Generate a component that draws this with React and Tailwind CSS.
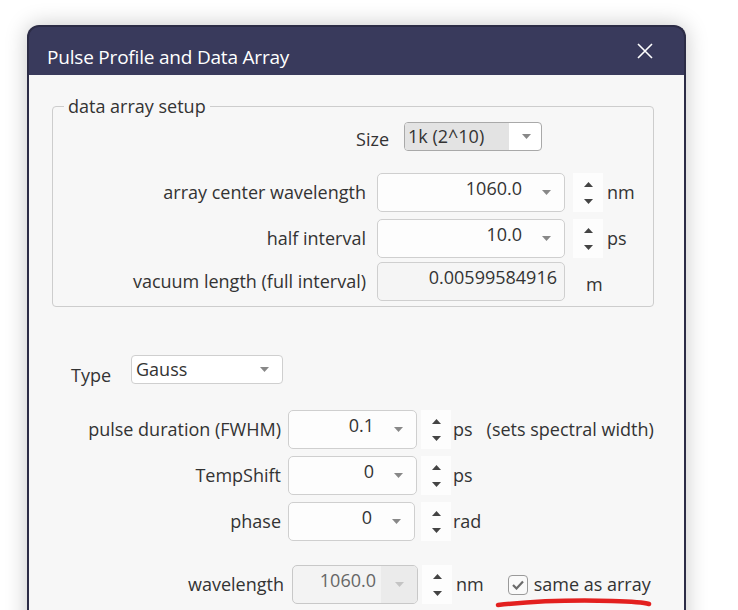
import React from "react";

const Tri = ({ up = false, className = "" }) => (
  <svg width="9" height="5" viewBox="0 0 9 5" className={className}>
    <path d={up ? "M0 5H9L4.5 0Z" : "M0 0H9L4.5 5Z"} fill="currentColor" />
  </svg>
);

const Spinner = ({ h = "h-[39px]" }) => (
  <div className={`w-[30px] ${h} bg-[#fdfdfd] flex flex-col items-center justify-center gap-[12px] text-[#444]`}>
    <Tri up />
    <Tri />
  </div>
);

const NumField = ({ value, w }) => (
  <div className={`${w} h-[39px] border border-[#cfcfcf] rounded-[5px] bg-[#fdfdfd] flex items-center justify-end pr-[13px]`}>
    <span className="mb-[9px] leading-none">{value}</span>
    <Tri className="ml-[20px] text-[#888]" />
  </div>
);

export default function App() {
  return (
    <div
      className="w-[738px] h-[610px] overflow-hidden bg-white text-[#333] text-[18px]"
      style={{ fontFamily: '"Open Sans", "Noto Sans", sans-serif' }}
    >
      <div className="ml-[27px] mt-[25px] w-[659px] h-[620px] rounded-t-[12px] border-x-2 border-t-2 border-[#2c2c46] bg-[#393a5c] shadow-[0_0_22px_rgba(0,0,0,0.22)] flex flex-col">
        {/* title bar */}
        <div className="h-[48px] flex items-center justify-between pl-[18px] pr-[31px]">
          <span className="text-white text-[19px] mt-[12px] tracking-[-0.2px]">Pulse Profile and Data Array</span>
          <svg width="16" height="16" viewBox="0 0 16 16" className="text-white">
            <path d="M1 1L15 15M15 1L1 15" stroke="currentColor" strokeWidth="1.6" />
          </svg>
        </div>
        {/* body */}
        <div className="flex-1 bg-[#f7f7f7] pt-[31px] pl-[23px]">
          {/* group box */}
          <div className="relative w-[602px] border border-[#cdcdcd] rounded-[4px] pt-[15px] pb-[5px]">
            <span className="absolute left-[11px] -top-[13px] px-[4px] bg-[#f7f7f7] leading-[24px]">data array setup</span>
            <div className="flex items-center h-[29px]">
              <span className="w-[336px] text-right mt-[5px]">Size</span>
              <div className="ml-[15px] w-[138px] h-[29px] border border-[#a9a9a9] rounded-[4px] bg-white flex items-center overflow-hidden">
                <span className="w-[104px] h-full bg-[#e3e3e3] flex items-center pl-[3px]">1k (2^10)</span>
                <Tri className="ml-[13px] text-[#888]" />
              </div>
            </div>
            <div className="flex items-center h-[39px] mt-[22px]">
              <span className="w-[313px] text-right">array center wavelength</span>
              <div className="ml-[11px]"><NumField value="1060.0" w="w-[188px]" /></div>
              <div className="ml-[8px]"><Spinner /></div>
              <span className="ml-[4px]">nm</span>
            </div>
            <div className="flex items-center h-[39px] mt-[7px]">
              <span className="w-[313px] text-right">half interval</span>
              <div className="ml-[11px]"><NumField value="10.0" w="w-[188px]" /></div>
              <div className="ml-[8px]"><Spinner /></div>
              <span className="ml-[4px]">ps</span>
            </div>
            <div className="flex items-center h-[39px] mt-[4px]">
              <span className="w-[313px] text-right">vacuum length (full interval)</span>
              <div className="ml-[11px] w-[188px] h-[39px] border border-[#cfcfcf] rounded-[5px] bg-[#f5f5f5] flex items-center justify-end pr-[7px]">
                <span className="mb-[9px] leading-none">0.00599584916</span>
              </div>
              <span className="ml-[21px] mt-[6px]">m</span>
            </div>
          </div>

          {/* type */}
          <div className="flex items-center h-[29px] mt-[48px] pl-[19px]">
            <span className="w-[60px] mt-[12px]">Type</span>
            <div className="w-[152px] h-[29px] border border-[#cfcfcf] rounded-[4px] bg-white flex items-center justify-between pl-[4px] pr-[13px]">
              <span>Gauss</span>
              <Tri className="text-[#888]" />
            </div>
          </div>

          <div className="flex items-center h-[39px] mt-[26px] -ml-[23px]">
            <span className="w-[252px] text-right">pulse duration (FWHM)</span>
            <div className="ml-[7px]"><NumField value="0.1" w="w-[129px]" /></div>
            <div className="ml-[4px]"><Spinner /></div>
            <span className="ml-[2px]">ps</span>
            <span className="ml-[14px]">(sets spectral width)</span>
          </div>
          <div className="flex items-center h-[39px] mt-[7px] -ml-[23px]">
            <span className="w-[252px] text-right">TempShift</span>
            <div className="ml-[7px]"><NumField value="0" w="w-[129px]" /></div>
            <div className="ml-[4px]"><Spinner /></div>
            <span className="ml-[2px]">ps</span>
          </div>
          <div className="flex items-center h-[39px] mt-[7px] -ml-[23px]">
            <span className="w-[252px] text-right">phase</span>
            <div className="ml-[7px]"><NumField value="0" w="w-[127px]" /></div>
            <div className="ml-[6px]"><Spinner /></div>
            <span className="ml-[2px]">rad</span>
          </div>
          <div className="relative flex items-center h-[39px] mt-[24px] -ml-[23px]">
            <span className="w-[255px] text-right">wavelength</span>
            <div className="ml-[8px] w-[126px] h-[39px] border border-[#c8c8c8] rounded-[5px] bg-[#f3f3f3] flex items-stretch overflow-hidden">
              <div className="flex-1 flex items-center justify-end pr-[5px] text-[#666]">
                <span className="mb-[9px] leading-none">1060.0</span>
              </div>
              <div className="w-[36px] bg-[#ebebeb] flex items-center justify-center text-[#c4c4c4]">
                <Tri />
              </div>
            </div>
            <div className="ml-[4px]"><Spinner /></div>
            <span className="ml-[4px]">nm</span>
            <div className="ml-[24px] w-[20px] h-[20px] border border-[#9a9a9a] rounded-[4px] bg-[#fafafa] flex items-center justify-center text-[#6b6b6b]">
              <svg width="12" height="10" viewBox="0 0 12 10">
                <path d="M1 5L4.5 8.5L11 1.5" fill="none" stroke="currentColor" strokeWidth="2.2" />
              </svg>
            </div>
            <span className="ml-[6px]">same as array</span>
            <svg
              width="160"
              height="12"
              viewBox="0 0 160 12"
              className="absolute left-[466px] top-[32px]"
            >
              <path d="M3 8C40 4 80 3 117 4C135 4.5 148 5 154 7" fill="none" stroke="#e3201f" strokeWidth="4.5" strokeLinecap="round" />
            </svg>
          </div>
        </div>
      </div>
    </div>
  );
}
